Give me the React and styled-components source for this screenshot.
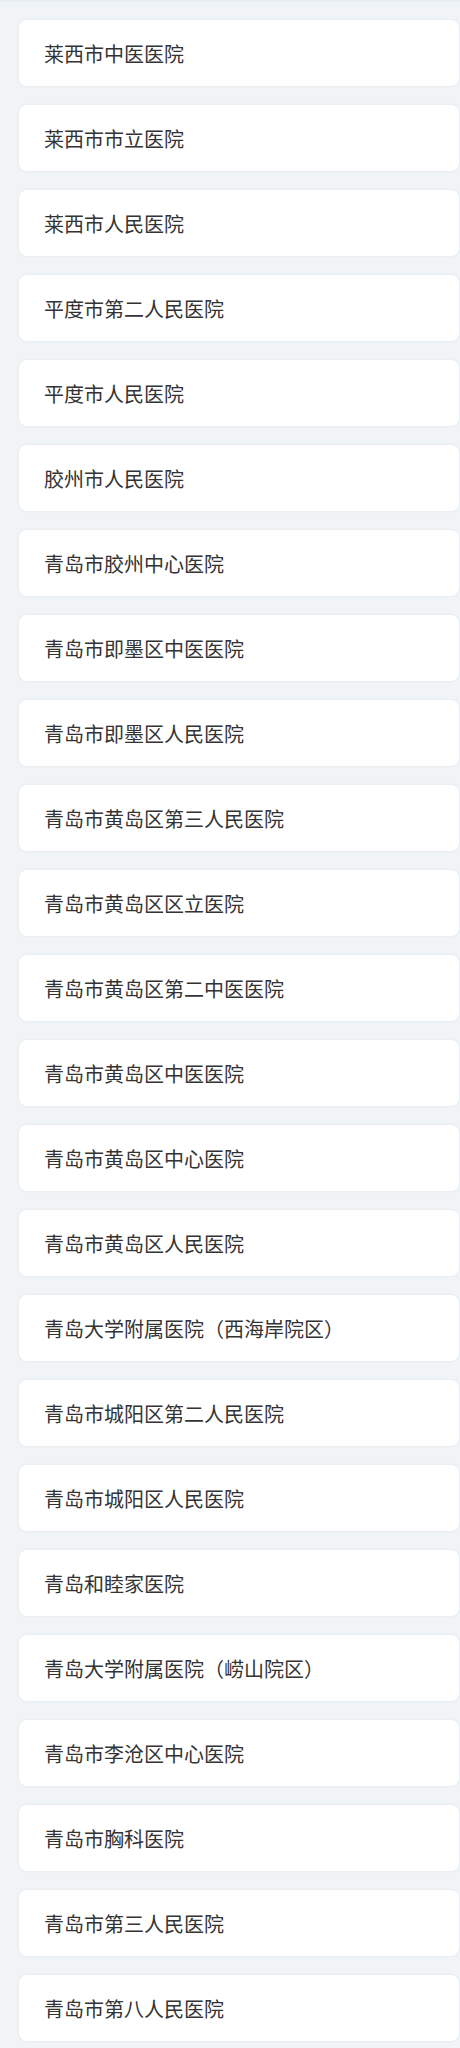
import styled, { createGlobalStyle } from 'styled-components'

const GlobalStyle = createGlobalStyle`
  html, body {
    margin: 0;
    padding: 0;
    background: #f0f4f7;
  }
  body {
    font-family: "Noto Sans CJK SC", "Noto Sans", sans-serif;
  }
`

const Page = styled.div`
  border-top: 2px solid #e9eef2;
  padding: 18px 1px 20px 19px;
  display: flex;
  flex-direction: column;
  gap: 19px;
`

const Card = styled.div`
  height: 66px;
  background: #fff;
  border-radius: 8px;
  box-shadow: 0 0 3px rgba(40, 60, 80, 0.08);
  display: flex;
  align-items: center;
  padding-left: 25px;
  font-size: 20px;
  color: #333;
`

const hospitals = [
  '莱西市中医医院',
  '莱西市市立医院',
  '莱西市人民医院',
  '平度市第二人民医院',
  '平度市人民医院',
  '胶州市人民医院',
  '青岛市胶州中心医院',
  '青岛市即墨区中医医院',
  '青岛市即墨区人民医院',
  '青岛市黄岛区第三人民医院',
  '青岛市黄岛区区立医院',
  '青岛市黄岛区第二中医医院',
  '青岛市黄岛区中医医院',
  '青岛市黄岛区中心医院',
  '青岛市黄岛区人民医院',
  '青岛大学附属医院（西海岸院区）',
  '青岛市城阳区第二人民医院',
  '青岛市城阳区人民医院',
  '青岛和睦家医院',
  '青岛大学附属医院（崂山院区）',
  '青岛市李沧区中心医院',
  '青岛市胸科医院',
  '青岛市第三人民医院',
  '青岛市第八人民医院',
]

const App = () => (
  <>
    <GlobalStyle />
    <Page>
      {hospitals.map((name) => (
        <Card key={name}>{name}</Card>
      ))}
    </Page>
  </>
)

export default App
